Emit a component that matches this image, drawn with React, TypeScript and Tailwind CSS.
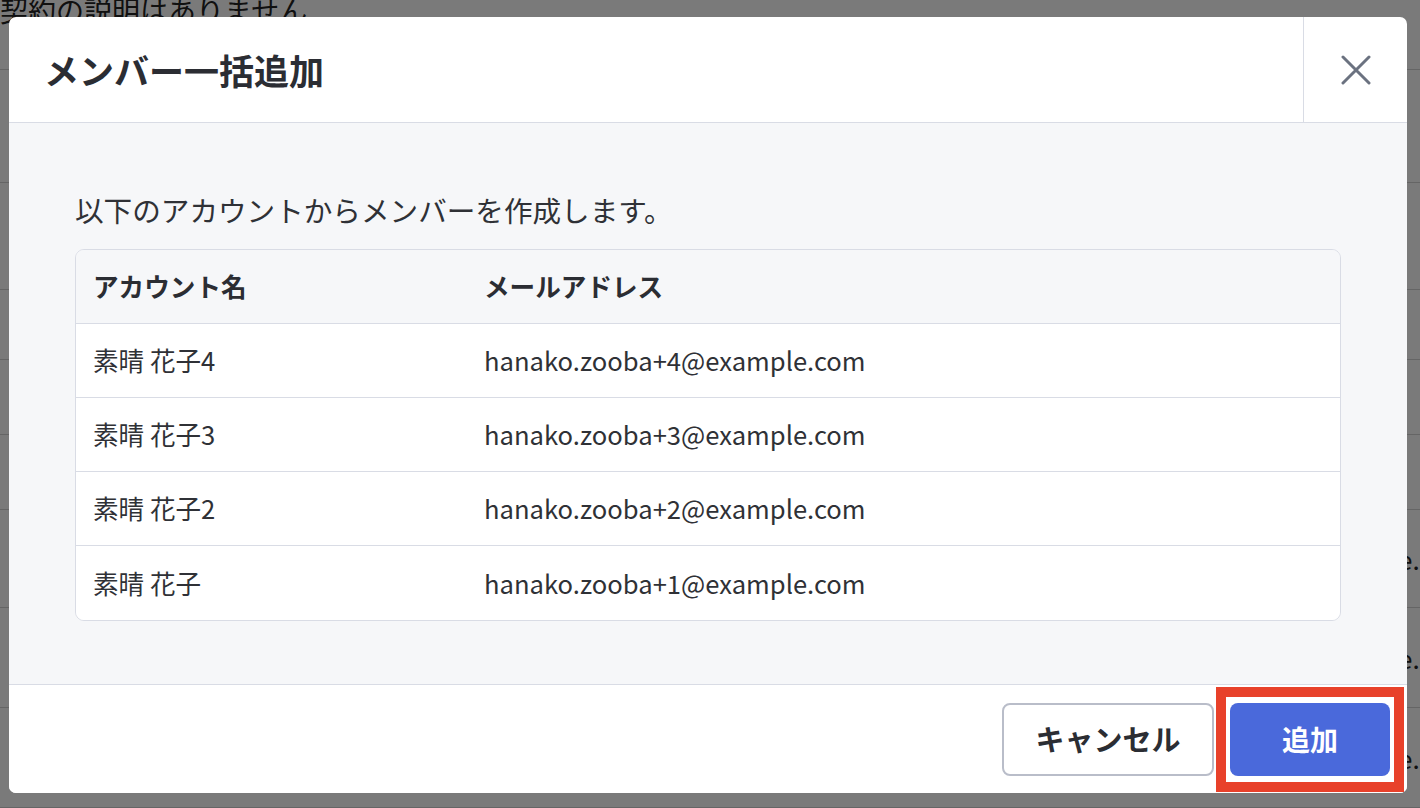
import React from "react";

const font = { fontFamily: '"Noto Sans CJK JP", "Noto Sans", sans-serif' };

const rows = [
  { name: "素晴 花子4", email: "hanako.zooba+4@example.com" },
  { name: "素晴 花子3", email: "hanako.zooba+3@example.com" },
  { name: "素晴 花子2", email: "hanako.zooba+2@example.com" },
  { name: "素晴 花子", email: "hanako.zooba+1@example.com" },
];

function BackgroundPage() {
  const heights = ["h-[113px]", "h-[107px]", "h-[70px]", "h-[75px]", "h-[75px]", "h-[98px]", "h-[100px]", "h-[100px]"];
  return (
    <div className="w-[1420px] h-[808px] bg-white overflow-hidden">
      <div className="h-[80px] border-b border-[#d4d4d4] -mt-[10px]">
        <div className="text-[28px] leading-[40px] text-[#222]">契約の説明はありません</div>
      </div>
      {heights.map((h, i) => (
        <div key={i} className={`${h} border-b border-[#d4d4d4] flex items-center justify-end overflow-hidden`}>
          {i >= 5 && (
            <div className="w-[22px] overflow-hidden whitespace-nowrap text-[26px] text-[#222]">e.</div>
          )}
        </div>
      ))}
    </div>
  );
}

export default function App() {
  return (
    <div className="relative w-[1420px] h-[808px] overflow-hidden" style={font}>
      <BackgroundPage />
      <div className="absolute inset-0 bg-black/[0.52]" />
      <div className="absolute left-[9px] top-[17px] w-[1398px] h-[776px] bg-white rounded-[7px] overflow-hidden flex flex-col">
        <div className="h-[106px] flex border-b border-[#d9dce5] shrink-0">
          <div className="flex-1 flex items-center pl-[35px]">
            <h1 className="text-[35px] font-bold text-[#2b2d33] leading-none">メンバー一括追加</h1>
          </div>
          <button className="w-[104px] border-l border-[#d9dce5] flex items-center justify-center">
            <svg width="30" height="30" viewBox="0 0 30 30" fill="none" stroke="#6b7280" strokeWidth="3" strokeLinecap="round">
              <path d="M2 2 L28 28 M28 2 L2 28" />
            </svg>
          </button>
        </div>
        <div className="flex-1 bg-[#f6f7f9] px-[66px] pt-[67px]">
          <p className="text-[28.6px] leading-[40px] text-[#2f3136] mb-[19px]">以下のアカウントからメンバーを作成します。</p>
          <div className="border border-[#d9dce5] rounded-[9px] overflow-hidden">
            <div className="grid grid-cols-[408px_1fr] h-[74px] items-center border-b border-[#d9dce5] bg-[#f6f7f9]">
              <div className="pl-[17px] text-[25.6px] font-bold text-[#2b2d33]">アカウント名</div>
              <div className="text-[25.6px] font-bold text-[#2b2d33]">メールアドレス</div>
            </div>
            {rows.map((r, i) => (
              <div
                key={i}
                className={`grid grid-cols-[408px_1fr] h-[74px] items-center bg-white ${i < rows.length - 1 ? "border-b border-[#d9dce5]" : ""}`}
              >
                <div className="pl-[17px] text-[25.6px] text-[#2f3136]">{r.name}</div>
                <div className="text-[25.6px] text-[#2f3136]">{r.email}</div>
              </div>
            ))}
          </div>
        </div>
        <div className="h-[109px] shrink-0 border-t border-[#d9dce5] bg-white flex items-center justify-end gap-[16px] pr-[17px]">
          <button className="w-[212px] h-[73px] border-2 border-[#b9bdc9] rounded-[8px] bg-white text-[29px] font-bold text-[#2b2d33]">
            キャンセル
          </button>
          <button className="w-[160px] h-[73px] rounded-[8px] bg-[#4a69db] text-[28px] font-bold text-white">
            追加
          </button>
        </div>
      </div>
      <div className="absolute left-[1216px] top-[687px] w-[188px] h-[105px] border-[10px] border-[#e8412a]" />
    </div>
  );
}
